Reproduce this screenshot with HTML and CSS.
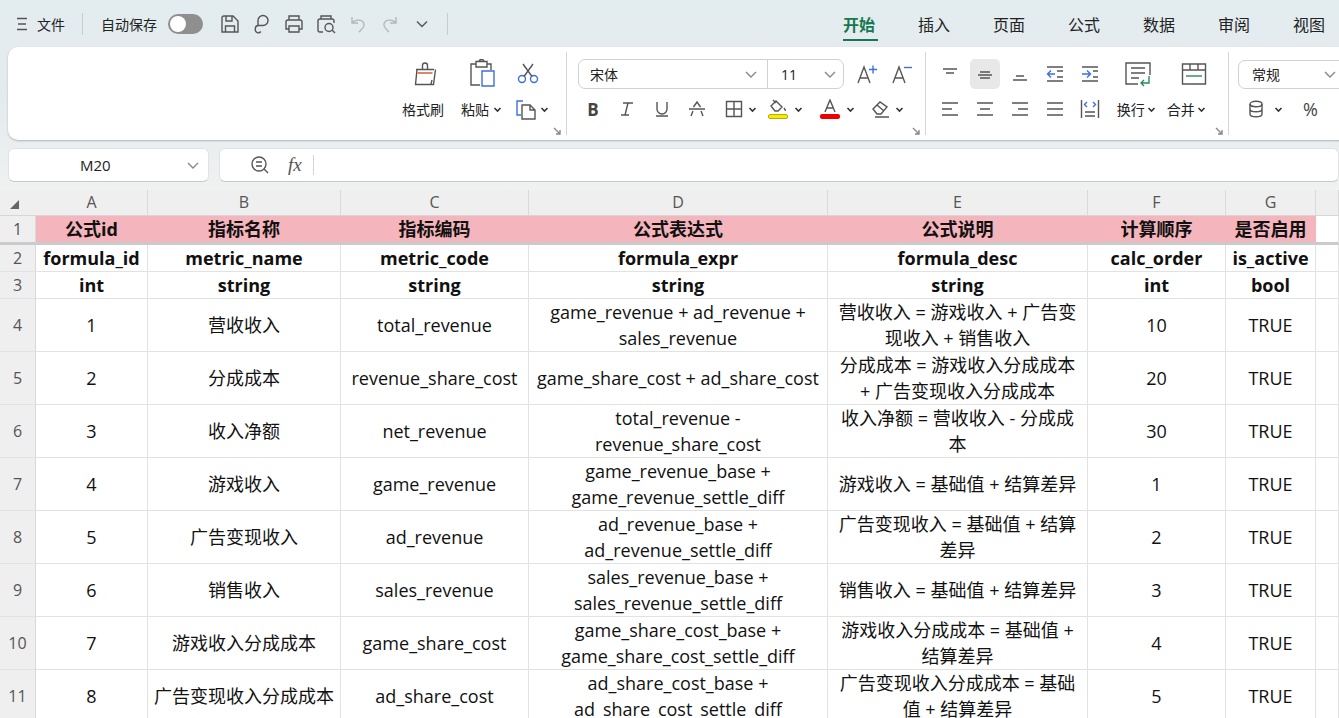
FILE: index.html
```html
<!DOCTYPE html>
<html lang="zh-CN">
	<head>
		<meta charset="UTF-8">
		<title>公式配置</title>
		<link rel="stylesheet" href="styles.css">
	</head>
	<body>
		<div class="app">
			<div class="topBar">
				<svg class="menuIcon" width="12" height="14" viewBox="0 0 12 14"><path d="M1 1.5h10M2 7h8M1 12.5h10"/></svg>
				<span class="fileLabel">文件</span>
				<span class="barDivider first"></span>
				<span class="autoSave">自动保存</span>
				<span class="toggle"><span class="knob"></span></span>
				<div class="quickTools">
					<svg width="22" height="22" viewBox="0 0 22 22"><path d="M3 5a2 2 0 0 1 2-2h9l5 5v11H3zM7 3v5h6V3M6.500 19v-6h9v6"/></svg>
					<svg width="22" height="22" viewBox="0 0 22 22"><path d="M7 13V7.500a5 5 0 1 1 5 5H7.500a3.200 3.200 0 0 0-3.200 3.200V17a3 3 0 0 0 5.500 1.500"/></svg>
					<svg width="22" height="22" viewBox="0 0 22 22"><path d="M6 7V3h10v4M6 16H3V9a2 2 0 0 1 2-2h12a2 2 0 0 1 2 2v7h-3M6 13h10v6H6z"/></svg>
					<svg width="22" height="22" viewBox="0 0 22 22"><path d="M6 6V3h10v3M8 19H5a2 2 0 0 1-2-2V8a2 2 0 0 1 2-2h12a2 2 0 0 1 2 2v2M14 10.500a4 4 0 1 0 0 8 4 4 0 0 0 0-8zM17 17l3 3"/></svg>
					<svg class="muted" width="22" height="22" viewBox="0 0 22 22"><path d="M5 4v6h6M5 10c3-4 11-4 12 1 .6 3-2 5-5 8"/></svg>
					<svg class="muted" width="22" height="22" viewBox="0 0 22 22"><path d="M17 4v6h-6M17 10c-3-4-11-4-12 1-.6 3 2 5 5 8"/></svg>
					<svg width="22" height="22" viewBox="0 0 22 22"><path d="M6 8.500l5 5 5-5"/></svg>
				</div>
				<span class="barDivider last"></span>
				<nav class="tabs">
					<span class="tab active">开始</span>
					<span class="tab">插入</span>
					<span class="tab">页面</span>
					<span class="tab">公式</span>
					<span class="tab">数据</span>
					<span class="tab">审阅</span>
					<span class="tab">视图</span>
				</nav>
			</div>

			<div class="ribbon">
				<div class="group clipGroup">
					<div class="row top">
						<svg class="brush" width="28" height="28" viewBox="0 0 28 28"><path d="M11.500 9V5.500a2.500 2.500 0 0 1 5 0V9M5 9.500h18M6 9.500l-1.500 15h18l2-15M21 20l-1 4"/><path class="accent" d="M6.500 13h15"/></svg>
						<svg class="paste" width="28" height="30" viewBox="0 0 28 30"><path d="M8 5H3v21h9M19 5h4v6M8 2.500h11V8H8zM11 2.500a2.500 2 0 0 1 5 0"/><path class="blue" d="M14 12h12v15H14z"/></svg>
						<svg class="scissors" width="22" height="22" viewBox="0 0 22 22"><g class="blue"><circle cx="5" cy="17" r="3.500"/><circle cx="17" cy="17" r="3.500"/></g><path d="M7 14.500L16 2M15 14.500L6 2"/></svg>
					</div>
					<div class="row bottom">
						<span class="rLabel brushLabel">格式刷</span>
						<span class="rLabel pasteLabel">粘贴</span>
						<svg class="chev" width="9" height="9" viewBox="0 0 9 9"><path d="M1.500 3l3 3 3-3"/></svg>
						<svg class="copyIcon" width="22" height="22" viewBox="0 0 22 22"><path class="blue" d="M8 3H2v14h4"/><path d="M7 7h8l5 5v9H7zM15 7v5h5"/></svg>
						<svg class="chev" width="9" height="9" viewBox="0 0 9 9"><path d="M1.500 3l3 3 3-3"/></svg>
					</div>
					<svg class="corner" width="8" height="8" viewBox="0 0 8 8"><path d="M1 1l6 6M7 3v4H3"/></svg>
				</div>

				<div class="group fontGroup">
					<div class="row top">
						<div class="fontBox">
							<span class="fontName">宋体<svg class="selChev" width="14" height="14" viewBox="0 0 14 14"><path d="M2 5l5 5 5-5"/></svg></span>
							<span class="fontSize">11<svg class="selChev" width="14" height="14" viewBox="0 0 14 14"><path d="M2 5l5 5 5-5"/></svg></span>
						</div>
						<svg class="growUp" width="22" height="22" viewBox="0 0 22 22"><path d="M2 20L8 4l6 16M4 15h8"/><path class="blue" d="M13 6.500h8M17 2.500v8"/></svg>
						<svg class="growDown" width="22" height="22" viewBox="0 0 22 22"><path d="M2 20L8 4l6 16M4 15h8"/><path class="blue" d="M13 4.500h8"/></svg>
					</div>
					<div class="row bottom fontTools">
						<span class="glyph bold">B</span>
						<svg width="18" height="18" viewBox="0 0 18 18"><path d="M5 3h10M10 3L7 15M3 15h8"/></svg>
						<svg width="18" height="18" viewBox="0 0 18 18"><path d="M4 2v7a5 5 0 0 0 10 0V2M3 16h12"/></svg>
						<svg width="18" height="18" viewBox="0 0 18 18"><path d="M5.500 7L9 2l3.500 5M5 11l-2 5M13 11l2 5M1 9h16"/></svg>
						<svg class="borderIcon" width="18" height="18" viewBox="0 0 18 18"><path d="M1.500 1.500h15v15h-15zM9 1.500v15M1.500 9h15"/></svg>
						<svg class="chev" width="9" height="9" viewBox="0 0 9 9"><path d="M1.500 3l3 3 3-3"/></svg>
						<span class="colorTool">
							<svg width="20" height="14" viewBox="0 0 20 14"><path d="M3 7l5-5 6 6-4 4H7zM5 1l3 3M16 9c1 1.500 1.500 2 1.500 3"/></svg>
							<span class="colorBar yellow"></span>
						</span>
						<svg class="chev" width="9" height="9" viewBox="0 0 9 9"><path d="M1.500 3l3 3 3-3"/></svg>
						<span class="colorTool textColor">
							<svg width="20" height="14" viewBox="0 0 20 14"><path d="M5 13l5-12 5 12M7 9h6"/></svg>
							<span class="colorBar red"></span>
						</span>
						<svg class="chev" width="9" height="9" viewBox="0 0 9 9"><path d="M1.500 3l3 3 3-3"/></svg>
						<svg class="eraser" width="20" height="20" viewBox="0 0 20 20"><path d="M2 10l7-7 7 5-6 7H6zM6 6l7 6M4 18h14"/></svg>
						<svg class="chev" width="9" height="9" viewBox="0 0 9 9"><path d="M1.500 3l3 3 3-3"/></svg>
					</div>
					<svg class="corner" width="8" height="8" viewBox="0 0 8 8"><path d="M1 1l6 6M7 3v4H3"/></svg>
				</div>

				<div class="group alignGroup">
					<div class="row top">
						<span class="alignBtn"><svg width="18" height="18" viewBox="0 0 18 18"><path d="M2 4h14M5 8h8"/></svg></span>
						<span class="alignBtn selected"><svg width="18" height="18" viewBox="0 0 18 18"><path d="M4 7h10M2 10h14M4 13h10"/></svg></span>
						<span class="alignBtn"><svg width="18" height="18" viewBox="0 0 18 18"><path d="M5 11h8M2 15h14"/></svg></span>
						<span class="alignBtn"><svg width="18" height="18" viewBox="0 0 18 18"><path d="M1 2h16M11 6h6M11 12h6M1 16h16"/><path class="blue" d="M9 9H2M5 5.500L1.500 9 5 12.500"/></svg></span>
						<span class="alignBtn"><svg width="18" height="18" viewBox="0 0 18 18"><path d="M1 2h16M12 6h5M12 12h5M1 16h16"/><path class="blue" d="M1 9h8M6 5.500L9.500 9 6 12.500"/></svg></span>
						<svg class="wrapIcon" width="28" height="26" viewBox="0 0 28 26"><path d="M14 23H2V2h24v12M7 7h14M7 12h14M7 17h8"/><path class="green" d="M25 15v7H17M20 19l-3 3 3 3"/></svg>
						<svg class="mergeIcon" width="26" height="24" viewBox="0 0 26 24"><path d="M1.500 2h23v20h-23zM1.500 8h23M9 2v6M17 2v6"/><path class="green" d="M5 14h16"/></svg>
					</div>
					<div class="row bottom">
						<span class="alignBtn"><svg width="18" height="18" viewBox="0 0 18 18"><path d="M1 3h16M1 9h10M1 15h16"/></svg></span>
						<span class="alignBtn"><svg width="18" height="18" viewBox="0 0 18 18"><path d="M1 3h16M4 9h10M1 15h16"/></svg></span>
						<span class="alignBtn"><svg width="18" height="18" viewBox="0 0 18 18"><path d="M1 3h16M7 9h10M1 15h16"/></svg></span>
						<span class="alignBtn"><svg width="18" height="18" viewBox="0 0 18 18"><path d="M1 3h16M1 9h16M1 15h16"/></svg></span>
						<span class="alignBtn"><svg width="20" height="20" viewBox="0 0 20 20"><path d="M1.500 1v18M18.500 1v18M5 13h10M5 17h10"/><path class="blue" d="M7 3L4.500 5.500 7 8M13 3l2.500 2.500L13 8"/></svg></span>
						<span class="rLabel wrapLabel">换行</span>
						<svg class="chev" width="9" height="9" viewBox="0 0 9 9"><path d="M1.500 3l3 3 3-3"/></svg>
						<span class="rLabel mergeLabel">合并</span>
						<svg class="chev" width="9" height="9" viewBox="0 0 9 9"><path d="M1.500 3l3 3 3-3"/></svg>
					</div>
					<svg class="corner" width="8" height="8" viewBox="0 0 8 8"><path d="M1 1l6 6M7 3v4H3"/></svg>
				</div>

				<div class="group numGroup">
					<div class="row top">
						<div class="numBox">常规<svg class="selChev" width="14" height="14" viewBox="0 0 14 14"><path d="M2 5l5 5 5-5"/></svg></div>
					</div>
					<div class="row bottom">
						<svg class="dbIcon" width="16" height="18" viewBox="0 0 16 18"><ellipse cx="8" cy="4" rx="6" ry="2.800"/><path d="M2 4v10c0 1.600 2.700 2.800 6 2.800s6-1.200 6-2.800V4M2 9c0 1.600 2.700 2.800 6 2.800s6-1.200 6-2.800"/></svg>
						<svg class="chev" width="9" height="9" viewBox="0 0 9 9"><path d="M1.500 3l3 3 3-3"/></svg>
						<span class="percent">%</span>
					</div>
				</div>
			</div>

			<div class="formulaRow">
				<div class="nameBox">
					<span class="cellName">M20</span>
					<svg class="selChev" width="14" height="14" viewBox="0 0 14 14"><path d="M2 5l5 5 5-5"/></svg>
				</div>
				<div class="formulaBox">
					<svg width="20" height="20" viewBox="0 0 20 20"><path d="M9 2a7 7 0 1 0 0 14 7 7 0 0 0 0-14zM6 7h6M6 11h6M14 14l4 4"/></svg>
					<span class="fx">fx</span>
					<span class="fxDivider"></span>
				</div>
			</div>

			<table class="sheet">
				<colgroup>
					<col class="colHead"><col class="colA"><col class="colB"><col class="colC"><col class="colD"><col class="colE"><col class="colF"><col class="colG"><col>
				</colgroup>
				<thead>
					<tr class="letters">
						<th class="corner-cell"><span class="selectAll"></span></th>
						<th>A</th><th>B</th><th>C</th><th>D</th><th>E</th><th>F</th><th>G</th><th></th>
					</tr>
				</thead>
				<tbody>
					<tr class="titleRow">
						<th>1</th><td>公式id</td><td>指标名称</td><td>指标编码</td><td>公式表达式</td><td>公式说明</td><td>计算顺序</td><td>是否启用</td><td class="blank"></td>
					</tr>
					<tr class="fieldRow">
						<th>2</th><td>formula_id</td><td>metric_name</td><td>metric_code</td><td>formula_expr</td><td>formula_desc</td><td>calc_order</td><td>is_active</td><td></td>
					</tr>
					<tr class="typeRow">
						<th>3</th><td>int</td><td>string</td><td>string</td><td>string</td><td>string</td><td>int</td><td>bool</td><td></td>
					</tr>
					<tr>
						<th>4</th><td>1</td><td>营收收入</td><td>total_revenue</td><td>game_revenue + ad_revenue +<br>sales_revenue</td><td>营收收入 = 游戏收入 + 广告变<br>现收入 + 销售收入</td><td>10</td><td>TRUE</td><td></td>
					</tr>
					<tr>
						<th>5</th><td>2</td><td>分成成本</td><td>revenue_share_cost</td><td>game_share_cost + ad_share_cost</td><td>分成成本 = 游戏收入分成成本<br>+ 广告变现收入分成成本</td><td>20</td><td>TRUE</td><td></td>
					</tr>
					<tr>
						<th>6</th><td>3</td><td>收入净额</td><td>net_revenue</td><td>total_revenue -<br>revenue_share_cost</td><td>收入净额 = 营收收入 - 分成成<br>本</td><td>30</td><td>TRUE</td><td></td>
					</tr>
					<tr>
						<th>7</th><td>4</td><td>游戏收入</td><td>game_revenue</td><td>game_revenue_base +<br>game_revenue_settle_diff</td><td>游戏收入 = 基础值 + 结算差异</td><td>1</td><td>TRUE</td><td></td>
					</tr>
					<tr>
						<th>8</th><td>5</td><td>广告变现收入</td><td>ad_revenue</td><td>ad_revenue_base +<br>ad_revenue_settle_diff</td><td>广告变现收入 = 基础值 + 结算<br>差异</td><td>2</td><td>TRUE</td><td></td>
					</tr>
					<tr>
						<th>9</th><td>6</td><td>销售收入</td><td>sales_revenue</td><td>sales_revenue_base +<br>sales_revenue_settle_diff</td><td>销售收入 = 基础值 + 结算差异</td><td>3</td><td>TRUE</td><td></td>
					</tr>
					<tr>
						<th>10</th><td>7</td><td>游戏收入分成成本</td><td>game_share_cost</td><td>game_share_cost_base +<br>game_share_cost_settle_diff</td><td>游戏收入分成成本 = 基础值 +<br>结算差异</td><td>4</td><td>TRUE</td><td></td>
					</tr>
					<tr>
						<th>11</th><td>8</td><td>广告变现收入分成成本</td><td>ad_share_cost</td><td>ad_share_cost_base +<br>ad_share_cost_settle_diff</td><td>广告变现收入分成成本 = 基础<br>值 + 结算差异</td><td>5</td><td>TRUE</td><td></td>
					</tr>
					<tr>
						<th></th><td></td><td></td><td></td><td></td><td></td><td></td><td></td><td></td>
					</tr>
				</tbody>
			</table>
		</div>
	</body>
</html>
```

FILE: styles.css
```css
* {
	box-sizing: border-box;
}
html, body {
	margin: 0;
	height: 100%;
	overflow: hidden;
}
body {
	font-family: "Open Sans", "Noto Sans CJK SC", sans-serif;
	color: #222;
}
svg {
	display: block;
	flex: none;
	fill: none;
	stroke: #555;
	stroke-width: 1.4;
}
svg .blue {
	stroke: #3d6fe0;
}
svg .green {
	stroke: #2a8a5e;
}
svg .accent {
	stroke: #c9552b;
}
.app {
	width: 1339px;
	height: 718px;
	overflow: hidden;
	background: linear-gradient(#e3ecef, #e4ebee 100px, #f0f1f1 190px);
}

/* title bar */
.topBar {
	display: flex;
	align-items: center;
	height: 47px;
	padding-left: 16px;
	font-size: 14px;
}
.menuIcon {
	margin-right: 9px;
}
.fileLabel {
	width: 30px;
}
.barDivider {
	width: 1px;
	height: 22px;
	background: #c6cdd0;
}
.barDivider.first {
	margin: 0 18px 0 15px;
}
.barDivider.last {
	margin-left: 14px;
}
.autoSave {
	width: 60px;
}
.toggle {
	width: 35px;
	height: 20px;
	margin-left: 7px;
	padding: 2px;
	border-radius: 10px;
	background: #8f8f8f;
}
.knob {
	display: block;
	width: 16px;
	height: 16px;
	border-radius: 50%;
	background: #fff;
}
.quickTools {
	display: flex;
	gap: 10px;
	margin-left: 16px;
}
.quickTools .muted {
	stroke: #b4b8ba;
}
.tabs {
	display: flex;
	gap: 43px;
	margin-left: 395px;
	font-size: 16px;
}
.tab {
	position: relative;
	width: 32px;
	white-space: nowrap;
}
.tab.active {
	color: #17784f;
	font-weight: bold;
}
.tab.active::after {
	content: "";
	position: absolute;
	left: 0;
	right: -3px;
	bottom: -5px;
	height: 2px;
	background: #17784f;
}

/* ribbon */
.ribbon {
	display: flex;
	width: 1340px;
	height: 93px;
	margin-left: 8px;
	padding-top: 5px;
	border-radius: 10px 0 0 10px;
	background: #fff;
	box-shadow: 0 1px 2px rgba(0, 0, 0, 0.25);
}
.group {
	position: relative;
	display: flex;
	flex-direction: column;
	height: 83px;
	padding-top: 7px;
	border-right: 1px solid #d6d6d6;
}
.row {
	display: flex;
	align-items: center;
}
.row.top {
	height: 30px;
	margin-bottom: 8px;
}
.row.bottom {
	height: 24px;
}
.rLabel {
	font-size: 14px;
	white-space: nowrap;
}
.chev {
	stroke: #333;
	stroke-width: 1.6;
}
.corner {
	position: absolute;
	right: 5px;
	bottom: 0;
	stroke: #888;
}
.selChev {
	stroke: #888;
}
.clipGroup {
	width: 560px;
	padding-left: 394px;
}
.clipGroup .brush {
	margin-left: 9px;
}
.clipGroup .paste {
	margin-left: 29px;
}
.clipGroup .scissors {
	margin-left: 21px;
	margin-bottom: 3px;
}
.brushLabel {
	width: 45px;
}
.pasteLabel {
	width: 30px;
	margin-left: 14px;
}
.pasteLabel + .chev {
	margin-left: 2px;
}
.copyIcon {
	margin-left: 13px;
}
.copyIcon + .chev {
	margin-left: 3px;
}
.fontGroup {
	width: 361px;
	padding-left: 11px;
}
.fontBox {
	display: flex;
	width: 266px;
	height: 30px;
	border: 1px solid #cfd2d4;
	border-radius: 7px;
	font-size: 14px;
}
.fontName, .fontSize {
	display: flex;
	align-items: center;
	justify-content: space-between;
}
.fontName {
	width: 189px;
	padding: 0 9px 0 11px;
	border-right: 1px solid #cfd2d4;
}
.fontSize {
	flex: 1;
	padding: 0 6px 0 13px;
}
.growUp {
	margin-left: 12px;
}
.growDown {
	margin-left: 13px;
}
.fontTools {
	padding-left: 7px;
}
.fontTools > svg:nth-child(2) {
	margin-left: 17px;
}
.fontTools > svg:nth-child(3), .fontTools > svg:nth-child(4) {
	margin-left: 17px;
}
.glyph.bold {
	width: 16px;
	font-size: 17px;
	font-weight: bold;
	text-align: center;
	color: #444;
}
.borderIcon {
	margin-left: 19px;
}
.borderIcon + .chev {
	margin-left: 5px;
}
.colorTool {
	display: block;
	width: 20px;
	margin-left: 11px;
}
.textColor {
	margin-left: 17px;
}
.colorTool + .chev {
	margin-left: 6px;
}
.colorBar {
	display: block;
	height: 5px;
	margin-top: 1px;
	border-radius: 2px;
}
.colorBar.yellow {
	background: #f5ec00;
	border: 1px solid #b5ac10;
}
.colorBar.red {
	background: #ee0000;
}
.eraser {
	margin-left: 16px;
}
.eraser + .chev {
	margin-left: 4px;
}
.alignGroup {
	width: 305px;
	padding-left: 9px;
}
.alignBtn {
	display: flex;
	align-items: center;
	justify-content: center;
	width: 30px;
	height: 30px;
	margin-right: 5px;
	border-radius: 5px;
}
.alignBtn.selected {
	background: #e8e8e8;
}
.wrapIcon {
	margin-left: 14px;
}
.mergeIcon {
	margin-left: 29px;
}
.wrapLabel {
	margin-left: 7px;
}
.wrapLabel + .chev {
	margin-left: 2px;
}
.mergeLabel {
	margin-left: 11px;
}
.mergeLabel + .chev {
	margin-left: 2px;
}
.numGroup {
	border-right: none;
	padding-left: 9px;
}
.numBox {
	display: flex;
	align-items: center;
	justify-content: space-between;
	width: 110px;
	height: 29px;
	padding: 0 10px 0 13px;
	border: 1px solid #cfd2d4;
	border-radius: 7px;
	font-size: 14px;
}
.dbIcon {
	margin-left: 10px;
}
.dbIcon + .chev {
	margin-left: 10px;
}
.percent {
	margin-left: 20px;
	font-size: 18px;
	color: #444;
}

/* formula bar */
.formulaRow {
	display: flex;
	gap: 10px;
	height: 34px;
	margin: 8px 0 8px 8px;
}
.nameBox, .formulaBox {
	display: flex;
	align-items: center;
	height: 34px;
	background: #fff;
	border: 1px solid #e0e2e3;
	border-bottom-color: #c8c8c8;
	border-radius: 6px;
}
.nameBox {
	width: 202px;
	justify-content: space-between;
	padding: 0 8px 0 71px;
}
.cellName {
	font-size: 15px;
}
.formulaBox {
	width: 1130px;
	padding-left: 30px;
}
.fx {
	width: 20px;
	margin-left: 18px;
	font-family: "Liberation Serif", serif;
	font-size: 19px;
	font-style: italic;
	color: #555;
}
.fxDivider {
	width: 1px;
	height: 20px;
	margin-left: 5px;
	background: #d6d6d6;
}

/* sheet */
.sheet {
	table-layout: fixed;
	width: 1339px;
	border-collapse: separate;
	border-spacing: 0;
	background: #fff;
	font-size: 18px;
	line-height: 26px;
}
.colHead { width: 36px; }
.colA { width: 112px; }
.colB { width: 193px; }
.colC { width: 188px; }
.colD { width: 299px; }
.colE { width: 260px; }
.colF { width: 138px; }
.colG { width: 90px; }
.sheet th, .sheet td {
	padding: 0;
	text-align: center;
	white-space: nowrap;
	border-right: 1px solid #e2e2e2;
	border-bottom: 1px solid #e2e2e2;
	color: #111;
	font-weight: normal;
}
.sheet tr {
	height: 52px;
}
.sheet th {
	background: #efefef;
	font-size: 16px;
	color: #555;
	border-right-color: #d9d9d9;
}
.letters {
	background: #efefef;
}
.sheet tr.letters {
	height: 26px;
}
.sheet .letters th {
	line-height: 25px;
	border-bottom-color: #d6d6d6;
}
.sheet .letters th:first-child {
	border-right-color: #efefef;
}
.selectAll {
	display: block;
	width: 0;
	height: 0;
	margin: 3px 0 0 10px;
	border-left: 9px solid transparent;
	border-bottom: 9px solid #666;
}
.sheet tr.titleRow {
	height: 29px;
}
.sheet .titleRow td, .sheet .titleRow th {
	line-height: 26px;
	border-bottom: 3px solid #cbcbcb;
}
.sheet .titleRow td {
	background: #f4b5bc;
	border-right-color: #f4b5bc;
	font-weight: bold;
}
.sheet .titleRow td.blank {
	background: #fff;
	border-right-color: #e2e2e2;
}
.sheet tr.fieldRow {
	height: 25px;
}
.sheet tr.typeRow {
	height: 27px;
}
.sheet .fieldRow td, .sheet .typeRow td {
	font-weight: bold;
	line-height: 24px;
}
```
